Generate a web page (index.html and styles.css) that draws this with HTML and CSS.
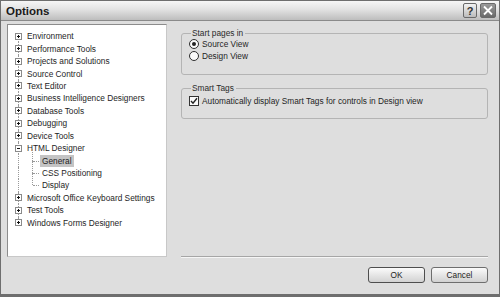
FILE: index.html
```html
<!DOCTYPE html>
<html lang="en">
<head>
    <meta charset="UTF-8">
    <title>Options</title>
    <link rel="stylesheet" href="styles.css">
</head>
<body>
    <div class="window">
        <div class="titlebar">
            <span class="title">Options</span>
            <div class="caption-buttons">
                <span class="cap-btn help">?</span>
                <span class="cap-btn close">
                    <svg width="12" height="11" viewBox="0 0 12 11"><path d="M2 1.5 L10 9.5 M10 1.5 L2 9.5" stroke="#fff" stroke-width="1.8"/></svg>
                </span>
            </div>
        </div>

        <div class="main">
            <ul class="tree">
                <li class="node"><span class="expander"></span>Environment</li>
                <li class="node"><span class="expander"></span>Performance Tools</li>
                <li class="node"><span class="expander"></span>Projects and Solutions</li>
                <li class="node"><span class="expander"></span>Source Control</li>
                <li class="node"><span class="expander"></span>Text Editor</li>
                <li class="node"><span class="expander"></span>Business Intelligence Designers</li>
                <li class="node"><span class="expander"></span>Database Tools</li>
                <li class="node"><span class="expander"></span>Debugging</li>
                <li class="node"><span class="expander"></span>Device Tools</li>
                <li class="node open"><span class="expander"></span>HTML Designer</li>
                <li class="child"><span class="label selected">General</span></li>
                <li class="child"><span class="label">CSS Positioning</span></li>
                <li class="child last"><span class="label">Display</span></li>
                <li class="node"><span class="expander"></span>Microsoft Office Keyboard Settings</li>
                <li class="node"><span class="expander"></span>Test Tools</li>
                <li class="node last"><span class="expander"></span>Windows Forms Designer</li>
            </ul>

            <div class="settings">
                <fieldset class="group">
                    <legend>Start pages in</legend>
                    <div class="option"><span class="radio checked"></span>Source View</div>
                    <div class="option"><span class="radio"></span>Design View</div>
                </fieldset>

                <fieldset class="group smart">
                    <legend>Smart Tags</legend>
                    <div class="option">
                        <span class="checkbox">
                            <svg width="8" height="8" viewBox="0 0 8 8"><path d="M1 4 L3 6.2 L7 1.2" fill="none" stroke="#222" stroke-width="1.4"/></svg>
                        </span>Automatically display Smart Tags for controls in Design view
                    </div>
                </fieldset>

                <div class="separator"></div>
            </div>
        </div>

        <div class="footer">
            <button class="btn ok">OK</button>
            <button class="btn">Cancel</button>
        </div>
    </div>
</body>
</html>
```

FILE: styles.css
```css
:root {
  --body-bg: #dedede;
  --text: #1e1e1e;
  --frame: #6e6e6e;
  --group-line: #b4b4b4;
  --tree-line: #9a9a9a;
}

* {
  box-sizing: border-box;
}

body {
  margin: 0;
  font-family: 'Liberation Sans', Arial, sans-serif;
  font-size: 8.3px;
  color: var(--text);
  -webkit-font-smoothing: antialiased;
}

.window {
  width: 500px;
  height: 297px;
  background-color: var(--body-bg);
  border: 1px solid var(--frame);
  border-bottom-width: 3px;
  display: flex;
  flex-direction: column;
}

/* title bar */
.titlebar {
  height: 20px;
  flex-shrink: 0;
  display: flex;
  align-items: center;
  justify-content: space-between;
  padding: 0 3px 0 5px;
  background: linear-gradient(#f6f6f6, #e2e2e2 45%, #bdbdbd);
  border-bottom: 1px solid #8a8a8a;
}

.title {
  font-weight: 700;
  font-size: 11.5px;
  color: #1a1a1a;
}

.caption-buttons {
  display: flex;
  gap: 3px;
}

.cap-btn {
  width: 14px;
  height: 15px;
  border: 1px solid #6a6a6a;
  border-radius: 2px;
  display: flex;
  align-items: center;
  justify-content: center;
}

.help {
  background: linear-gradient(#f2f2f2, #bcbcbc);
  font-weight: 700;
  font-size: 11px;
  color: #333;
}

.close {
  width: 16px;
  background: linear-gradient(#9a9a9a, #6a6a6a);
}

/* tree + settings */
.main {
  display: flex;
  gap: 14px;
  padding: 3px 11px 0 6px;
  height: 236px;
}

.tree {
  width: 160px;
  margin: 0;
  padding: 5px 0 0 7px;
  list-style: none;
  background-color: #fff;
  border: 1px solid #8c8c8c;
  border-right-color: #c8c8c8;
  border-bottom-color: #c8c8c8;
}

.tree li {
  height: 12.45px;
  display: flex;
  align-items: center;
  position: relative;
  white-space: nowrap;
}

/* dotted connector down the root level */
.tree .node::before,
.tree .child::before {
  content: '';
  position: absolute;
  left: 3px;
  top: 0;
  bottom: 0;
  border-left: 1px dotted var(--tree-line);
}

.tree .node:first-child::before {
  top: 6px;
}

.tree .node.last::before {
  bottom: 6px;
}

.expander {
  width: 7px;
  height: 7px;
  border: 1px solid #8a8a8a;
  background: #fff;
  margin-right: 5px;
  position: relative;
  z-index: 1;
  flex-shrink: 0;
}

.expander::before,
.expander::after {
  content: '';
  position: absolute;
  background-color: #111;
}

.expander::before {
  left: 1px;
  right: 1px;
  top: 2px;
  height: 1px;
}

.expander::after {
  top: 1px;
  bottom: 1px;
  left: 2px;
  width: 1px;
}

.open .expander::after {
  display: none;
}

.child {
  padding-left: 25px;
}

.child .label {
  position: relative;
  padding: 1px 2px;
}

.child .label::before {
  content: '';
  position: absolute;
  left: -7px;
  top: 6px;
  width: 6px;
  border-top: 1px dotted var(--tree-line);
}

.child .label::after {
  content: '';
  position: absolute;
  left: -8px;
  top: -6px;
  height: 12px;
  border-left: 1px dotted var(--tree-line);
}

.label.selected {
  background-color: #c4c4c4;
}

.settings {
  flex: 1;
  display: flex;
  flex-direction: column;
}

.group {
  margin: 4px 0 0;
  padding: 0 0 12px 7px;
  border: 1px solid var(--group-line);
  border-radius: 3px;
  min-width: 0;
}

.group legend {
  padding: 0 2px 0 1px;
  margin-left: 2px;
  color: #2a2a2a;
}

.group.smart {
  margin-top: 8px;
  padding-top: 2px;
  padding-bottom: 11px;
}

.option {
  display: flex;
  align-items: center;
  height: 12px;
  white-space: nowrap;
}

.radio {
  width: 10px;
  height: 10px;
  border: 1px solid #2e2e2e;
  border-radius: 50%;
  background: #fafafa;
  margin-right: 3px;
  display: flex;
  align-items: center;
  justify-content: center;
}

.radio.checked::after {
  content: '';
  width: 4px;
  height: 4px;
  border-radius: 50%;
  background-color: #222;
}

.checkbox {
  width: 10px;
  height: 10px;
  border: 1px solid #333;
  background: #fafafa;
  margin-right: 3px;
  display: flex;
  align-items: center;
  justify-content: center;
}

.separator {
  margin-top: auto;
  margin-bottom: -1px;
  border-top: 1px solid #a6a6a6;
  border-bottom: 1px solid #f6f6f6;
}

/* bottom buttons */
.footer {
  display: flex;
  justify-content: flex-end;
  gap: 6px;
  padding: 10px 11px 0 0;
}

.btn {
  width: 57px;
  height: 16px;
  font-family: inherit;
  font-size: 8.3px;
  color: var(--text);
  border: 1px solid #6e6e6e;
  border-radius: 3px;
  background: linear-gradient(#fbfbfb, #e6e6e6 50%, #d2d2d2);
  padding: 0;
}

.btn.ok {
  border-color: #4e4e4e;
}
```
